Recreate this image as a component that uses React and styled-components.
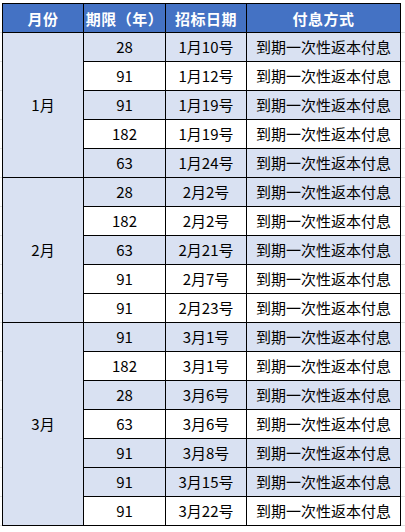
import React from 'react';
import styled, { createGlobalStyle } from 'styled-components';

const GlobalStyles = createGlobalStyle`
  html, body {
    margin: 0;
    padding: 0;
    background: #ffffff;
  }
  body {
    font-family: "Noto Sans CJK SC", "Liberation Sans", sans-serif;
  }
`;

const Sheet = styled.div`
  width: 405px;
  height: 532px;
  box-sizing: border-box;
  padding: 3px 0 0 2px;
  overflow: hidden;
  background-image:
    repeating-linear-gradient(to bottom, transparent 0 28px, #e1e1e1 28px 29px);
  background-position: 0 4px;
`;

const Table = styled.table`
  border-collapse: collapse;
  table-layout: fixed;
  width: 398px;
  background: #ffffff;
  font-size: 15px;
  color: #000000;
`;

const HeadCell = styled.th`
  height: 28px;
  padding: 0;
  border: 1px solid #000000;
  background: #4472c4;
  color: #ffffff;
  font-weight: 700;
  font-size: 15px;
  text-align: center;
  vertical-align: middle;
  letter-spacing: 0.5px;
`;

const Cell = styled.td`
  height: 28px;
  padding: 0;
  border: 1px solid #000000;
  background: ${(p) => (p.$shade ? '#d9e1f2' : '#ffffff')};
  text-align: center;
  vertical-align: middle;
  white-space: nowrap;
  line-height: 28px;
`;

const MonthCell = styled(Cell)`
  background: #d9e1f2;
`;

const groups = [
  {
    month: '1月',
    rows: [
      ['28', '1月10号', 1],
      ['91', '1月12号', 0],
      ['91', '1月19号', 1],
      ['182', '1月19号', 0],
      ['63', '1月24号', 1],
    ],
  },
  {
    month: '2月',
    rows: [
      ['28', '2月2号', 1],
      ['182', '2月2号', 0],
      ['63', '2月21号', 1],
      ['91', '2月7号', 0],
      ['91', '2月23号', 0],
    ],
  },
  {
    month: '3月',
    rows: [
      ['91', '3月1号', 1],
      ['182', '3月1号', 0],
      ['28', '3月6号', 1],
      ['63', '3月6号', 0],
      ['91', '3月8号', 1],
      ['91', '3月15号', 1],
      ['91', '3月22号', 0],
    ],
  },
];

function App() {
  return (
    <>
      <GlobalStyles />
      <Sheet>
        <Table>
          <colgroup>
            <col style={{ width: 81 }} />
            <col style={{ width: 82 }} />
            <col style={{ width: 81 }} />
            <col style={{ width: 154 }} />
          </colgroup>
          <thead>
            <tr>
              <HeadCell>月份</HeadCell>
              <HeadCell>期限（年）</HeadCell>
              <HeadCell>招标日期</HeadCell>
              <HeadCell>付息方式</HeadCell>
            </tr>
          </thead>
          <tbody>
            {groups.map((g) =>
              g.rows.map((r, i) => (
                <tr key={g.month + i}>
                  {i === 0 && <MonthCell rowSpan={g.rows.length}>{g.month}</MonthCell>}
                  <Cell $shade={r[2]}>{r[0]}</Cell>
                  <Cell $shade={r[2]}>{r[1]}</Cell>
                  <Cell $shade={r[2]}>到期一次性返本付息</Cell>
                </tr>
              ))
            )}
          </tbody>
        </Table>
      </Sheet>
    </>
  );
}

export default App;
